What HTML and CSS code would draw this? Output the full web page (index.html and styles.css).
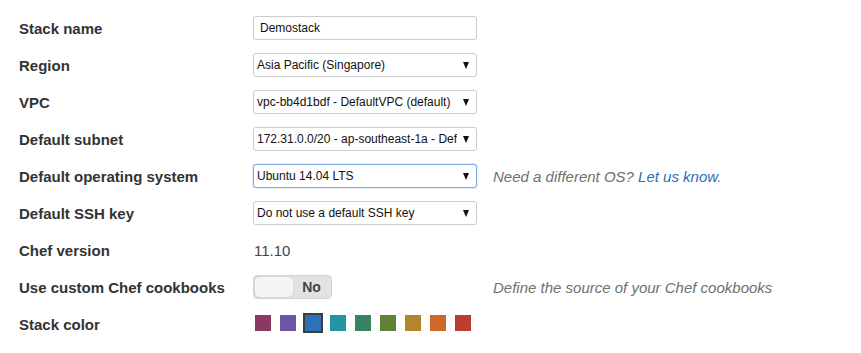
FILE: index.html
```html
<!DOCTYPE html>
<html lang="en">
<head>
    <meta charset="UTF-8">
    <title>Add stack</title>
    <link rel="stylesheet" href="styles.css">
</head>
<body>
    <form class="stack-form">
        <div class="form-row">
            <label class="form-label">Stack name</label>
            <div class="field text-input">Demostack</div>
        </div>

        <div class="form-row">
            <label class="form-label">Region</label>
            <div class="field select"><span class="select-text">Asia Pacific (Singapore)</span><span class="arrow"></span></div>
        </div>

        <div class="form-row">
            <label class="form-label">VPC</label>
            <div class="field select"><span class="select-text">vpc-bb4d1bdf - DefaultVPC (default)</span><span class="arrow"></span></div>
        </div>

        <div class="form-row">
            <label class="form-label">Default subnet</label>
            <div class="field select"><span class="select-text">172.31.0.0/20 - ap-southeast-1a - Def</span><span class="arrow"></span></div>
        </div>

        <div class="form-row">
            <label class="form-label">Default operating system</label>
            <div class="field select focused"><span class="select-text">Ubuntu 14.04 LTS</span><span class="arrow"></span></div>
            <p class="help">Need a different OS? <a href="#">Let us know</a>.</p>
        </div>

        <div class="form-row">
            <label class="form-label">Default SSH key</label>
            <div class="field select"><span class="select-text">Do not use a default SSH key</span><span class="arrow"></span></div>
        </div>

        <div class="form-row">
            <label class="form-label">Chef version</label>
            <div class="static-value">11.10</div>
        </div>

        <div class="form-row">
            <label class="form-label">Use custom Chef cookbooks</label>
            <div class="field-plain">
                <div class="toggle">
                    <span class="toggle-knob"></span>
                    <span class="toggle-label">No</span>
                </div>
            </div>
            <p class="help">Define the source of your Chef cookbooks</p>
        </div>

        <div class="form-row">
            <label class="form-label">Stack color</label>
            <div class="swatches">
                <span class="swatch plum"></span>
                <span class="swatch purple"></span>
                <span class="swatch blue selected"></span>
                <span class="swatch teal"></span>
                <span class="swatch green"></span>
                <span class="swatch olive"></span>
                <span class="swatch mustard"></span>
                <span class="swatch orange"></span>
                <span class="swatch red"></span>
            </div>
        </div>
    </form>
</body>
</html>
```

FILE: styles.css
```css
body {
    margin: 0;
    padding: 16px 0 0 19px;
    font-family: "Liberation Sans", Arial, sans-serif;
    color: #333;
    background-color: #fff;
}

.stack-form {
    display: flex;
    flex-direction: column;
    gap: 13px;
}

.form-row {
    display: grid;
    grid-template-columns: 218px 224px auto;
    column-gap: 16px;
    align-items: center;
    height: 24px;
}

.form-label {
    font-size: 15px;
    font-weight: bold;
    color: #333;
}

.field {
    box-sizing: border-box;
    height: 24px;
    border: 1px solid #ccc;
    border-radius: 3px;
    background-color: #fff;
    font-size: 12px;
    color: #111;
    display: flex;
    align-items: center;
    padding: 0 6px;
}

.text-input {
    padding-left: 6px;
}

.select {
    padding: 0 6px 0 3px;
}

.select-text {
    flex: 1;
    overflow: hidden;
    white-space: nowrap;
}

.arrow {
    width: 0;
    height: 0;
    margin: 1px 1px 0 6px;
    border-left: 3px solid transparent;
    border-right: 3px solid transparent;
    border-top: 7px solid #111;
}

.focused {
    border-color: #7aa7e3;
    box-shadow: 0 0 2px rgba(102, 155, 233, 0.6);
}

.help {
    margin: 0;
    font-size: 15px;
    font-style: italic;
    color: #707070;
}

.help a {
    color: #2a6ebb;
    text-decoration: none;
}

.static-value {
    font-size: 15px;
    color: #444;
    padding-left: 1px;
}

.toggle {
    box-sizing: border-box;
    width: 79px;
    height: 24px;
    border: 1px solid #d2d2d2;
    border-radius: 4px;
    background-color: #e2e2e2;
    display: flex;
    align-items: center;
    padding: 1px;
}

.toggle-knob {
    width: 38px;
    height: 20px;
    border-radius: 4px;
    background-color: #f4f4f4;
    box-shadow: 0 0 1px rgba(0, 0, 0, 0.35);
}

.toggle-label {
    flex: 1;
    text-align: center;
    font-size: 14px;
    font-weight: bold;
    color: #444;
}

.swatches {
    display: flex;
    gap: 5px;
    margin-top: -3px;
    grid-column: 2 / 4;
}

.swatch {
    box-sizing: border-box;
    width: 20px;
    height: 20px;
    border: 2px solid transparent;
    background-clip: padding-box;
}

.swatch.selected {
    border: 2px solid #3d3d3d;
    background-clip: border-box;
}

.plum { background-color: #8a3a62; }
.purple { background-color: #7055a6; }
.blue { background-color: #2d71b8; }
.teal { background-color: #2493a7; }
.green { background-color: #35845f; }
.olive { background-color: #608237; }
.mustard { background-color: #b4852b; }
.orange { background-color: #d2672a; }
.red { background-color: #bb3e31; }
```
